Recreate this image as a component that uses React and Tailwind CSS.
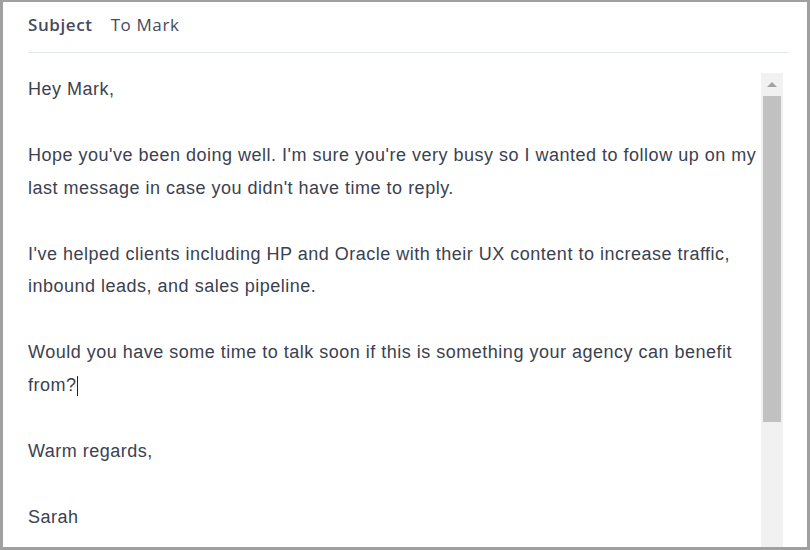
import React from "react";

const paragraphs = [
  ["Hey Mark,"],
  [
    "Hope you've been doing well. I'm sure you're very busy so I wanted to follow up on my",
    "last message in case you didn't have time to reply.",
  ],
  [
    "I've helped clients including HP and Oracle with their UX content to increase traffic,",
    "inbound leads, and sales pipeline.",
  ],
  [
    "Would you have some time to talk soon if this is something your agency can benefit",
    "from?",
  ],
  ["Warm regards,"],
  ["Sarah"],
];

function Scrollbar() {
  return (
    <div className="w-[22px] mt-[20px] bg-[#f1f1f1] flex flex-col items-center">
      <div className="h-[23px] flex items-center justify-center">
        <div className="w-0 h-0 border-l-[5px] border-r-[5px] border-b-[5px] border-l-transparent border-r-transparent border-b-[#a3a3a3]" />
      </div>
      <div className="w-[18px] h-[326px] bg-[#c1c1c1]" />
    </div>
  );
}

export default function App() {
  return (
    <div className="w-[810px] h-[550px] bg-white border-t-2 border-l-[3px] border-r-[3px] border-b-[3px] border-[#a0a0a0] overflow-hidden flex flex-col">
      {/* subject row */}
      <div className="pl-[25px] pr-[18px] pt-[10px]">
        <div className="flex items-center gap-[18px] h-[25px] font-['Open_Sans',sans-serif] text-[17px] tracking-[0.6px] text-[#454a5c]">
          <span className="font-semibold">Subject</span>
          <span>To Mark</span>
        </div>
        <div className="mt-[15px] border-t border-[#e3e7ee]" />
      </div>

      {/* body */}
      <div className="flex flex-1 min-h-0 pl-[25px] pr-[24px]">
        <div className="flex-1 pt-[20px] font-['Liberation_Sans',Arial,sans-serif] text-[18px] tracking-[0.5px] leading-[32.9px] text-[#3b4150]">
          {paragraphs.map((lines, i) => (
            <div key={i} className="mb-[32.9px]">
              {lines.map((l, j) => (
                <div key={j} className="whitespace-nowrap">
                  {l}
                  {l === "from?" && (
                    <span className="inline-block w-px h-[20px] bg-[#222] align-middle" />
                  )}
                </div>
              ))}
            </div>
          ))}
        </div>
        <Scrollbar />
      </div>
    </div>
  );
}
